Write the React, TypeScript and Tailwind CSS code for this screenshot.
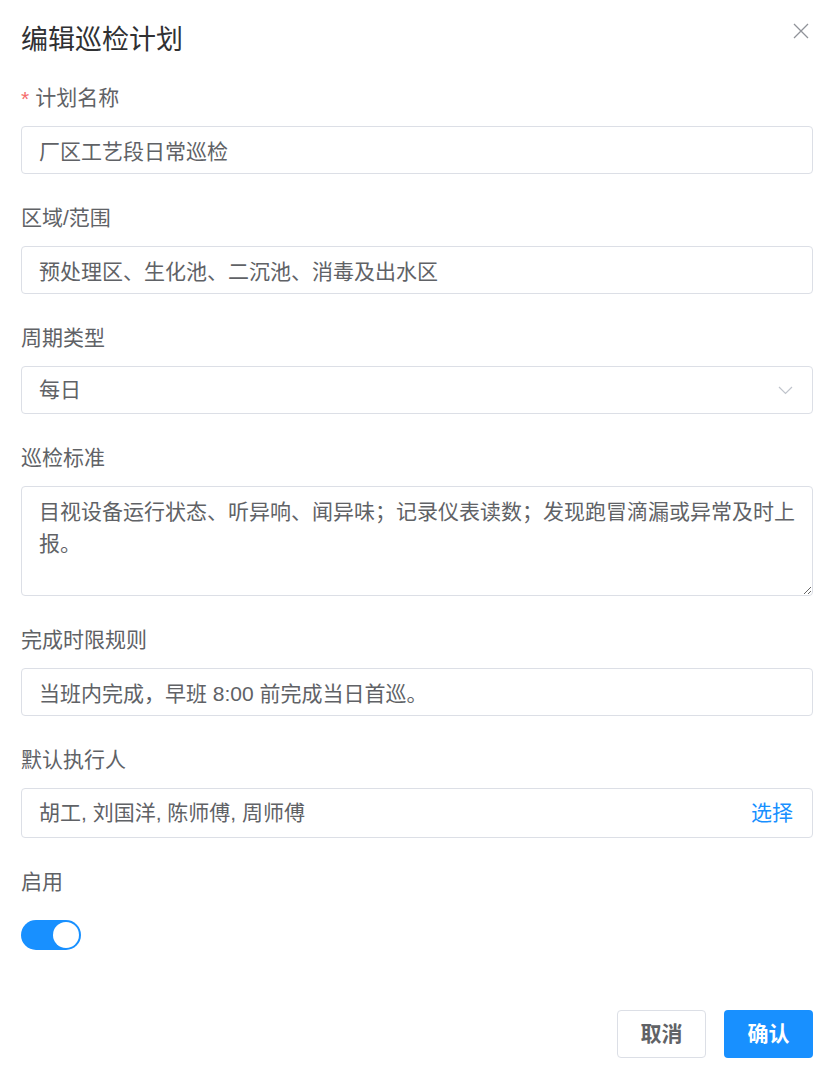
import { useState } from "react";

const FONT = { fontFamily: '"Liberation Sans", "Noto Sans CJK SC", sans-serif' };

function Label({ text, required }: { text: string; required?: boolean }) {
  return (
    <div className="h-[28px] leading-[28px] mb-[14px] text-[21px] text-[#606266] flex items-center">
      {required && <span className="text-[#f56c6c] text-[21px] mr-[6px] leading-none">*</span>}
      <span>{text}</span>
    </div>
  );
}

function Field({ label, required, children }: { label: string; required?: boolean; children: React.ReactNode }) {
  return (
    <div className="mb-[30px]">
      <Label text={label} required={required} />
      {children}
    </div>
  );
}

function Inp({ value, onChange }: { value: string; onChange: (v: string) => void }) {
  return (
    <input value={value} onChange={(e) => onChange(e.target.value)}
      className="block w-full h-[48px] rounded-[4px] border border-[#dcdfe6] bg-white px-[17px] text-[21px] text-[#606266] outline-none" />
  );
}

export default function App() {
  const [name, setName] = useState("厂区工艺段日常巡检");
  const [area, setArea] = useState("预处理区、生化池、二沉池、消毒及出水区");
  const [std, setStd] = useState("目视设备运行状态、听异响、闻异味；记录仪表读数；发现跑冒滴漏或异常及时上报。");
  const [rule, setRule] = useState("当班内完成，早班 8:00 前完成当日首巡。");
  const [on, setOn] = useState(true);

  return (
    <div style={FONT} className="min-h-[1074px] w-[831px] bg-white pl-[21px] pr-[18px] pt-[22px] pb-[17px]">
      <div className="flex items-start justify-between h-[62px]">
        <h1 className="text-[27px] leading-[36px] font-normal text-[#303133]">编辑巡检计划</h1>
        <button className="mt-[1px] mr-[4px] text-[#909399]" aria-label="关闭">
          <svg width="16" height="16" viewBox="0 0 16 16" fill="none" stroke="currentColor" strokeWidth="1.3">
            <path d="M1 1 L15 15 M15 1 L1 15" />
          </svg>
        </button>
      </div>

      <Field label="计划名称" required>
        <Inp value={name} onChange={setName} />
      </Field>

      <Field label="区域/范围">
        <Inp value={area} onChange={setArea} />
      </Field>

      <Field label="周期类型">
        <div className="flex items-center justify-between h-[48px] rounded-[4px] border border-[#dcdfe6] pl-[17px] pr-[19px] text-[21px] text-[#606266]">
          <span>每日</span>
          <svg width="15" height="9" viewBox="0 0 15 9" fill="none" stroke="#c0c4cc" strokeWidth="1.2">
            <path d="M1 1 L7.5 7.5 L14 1" />
          </svg>
        </div>
      </Field>

      <Field label="巡检标准">
        <textarea value={std} onChange={(e) => setStd(e.target.value)}
          className="block w-full h-[110px] rounded-[4px] border border-[#dcdfe6] pl-[17px] pr-[12px] py-[9px] text-[21px] leading-[31.5px] text-[#606266] outline-none resize-y" />
      </Field>

      <Field label="完成时限规则">
        <Inp value={rule} onChange={setRule} />
      </Field>

      <Field label="默认执行人">
        <div className="flex items-center justify-between h-[50px] rounded-[4px] border border-[#dcdfe6] pl-[17px] pr-[19px] text-[21px]">
          <span className="text-[#606266]">胡工, 刘国洋, 陈师傅, 周师傅</span>
          <button className="text-[#1890ff]">选择</button>
        </div>
      </Field>

      <div>
        <Label text="启用" />
        <button onClick={() => setOn(!on)}
          className={`mt-[24px] relative block w-[60px] h-[30px] rounded-full ${on ? "bg-[#1890ff]" : "bg-[#dcdfe6]"}`}>
          <span className={`absolute top-[2px] h-[26px] w-[26px] rounded-full bg-white ${on ? "right-[2px]" : "left-[2px]"}`} />
        </button>
      </div>

      <div className="flex justify-end gap-[18px] mt-[60px]">
        <button className="h-[48px] w-[89px] rounded-[4px] border border-[#dcdfe6] bg-white text-[21px] font-bold text-[#606266]">取消</button>
        <button className="h-[48px] w-[89px] rounded-[4px] bg-[#1890ff] text-[21px] font-bold text-white">确认</button>
      </div>
    </div>
  );
}
